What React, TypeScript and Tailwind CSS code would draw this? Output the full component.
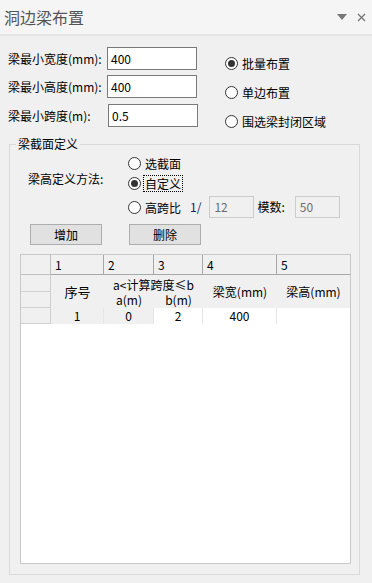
import React from "react";

const ui = { fontFamily: '"Noto Sans CJK SC", "Microsoft YaHei", sans-serif' };

function Radio({ label, checked, focus }: { label: string; checked?: boolean; focus?: boolean }) {
  return (
    <div className="flex items-center">
      <span className="flex h-[13px] w-[13px] items-center justify-center rounded-full border border-[#333] bg-white">
        {checked && <span className="h-[7px] w-[7px] rounded-full bg-[#333]" />}
      </span>
      <span
        className={
          "ml-[2px] text-[12px] leading-[15px] text-black " +
          (focus ? "border border-dotted border-black px-[1px]" : "border border-transparent px-[1px]")
        }
      >
        {label}
      </span>
    </div>
  );
}

function Field({ label, value, offset }: { label: string; value: string; offset?: boolean }) {
  return (
    <div className="flex h-[23px] items-center">
      <span className={(offset ? "w-[100px]" : "w-[99px]") + " text-[12px] text-black"}>{label}</span>
      <div className="flex h-[23px] w-[90px] items-center border border-[#7a7a7a] bg-white px-[3px] text-[12px] text-black">
        {value}
      </div>
    </div>
  );
}

export default function App() {
  const head = "flex items-center bg-[#f0f0f0] pl-[4px] text-[12px] leading-none text-black border-r border-b border-[#a8a8a8]";
  const rowHead = "bg-[#f0f0f0] border-r border-b border-[#d0d0d0]";
  const cell = "flex items-center justify-center overflow-hidden whitespace-nowrap text-[12px] leading-none text-black";

  return (
    <div className="h-[583px] w-[372px] overflow-hidden bg-[#f0f0f0]" style={ui}>
      {/* title bar */}
      <div className="flex h-[36px] items-center justify-between border-b-2 border-[#e6e6e6] bg-[#f5f5f5] pl-[4px] pr-[6px]">
        <span className="text-[16px] leading-none text-[#555]">洞边梁布置</span>
        <div className="flex items-center gap-[10px]">
          <svg width="10" height="6" viewBox="0 0 10 6">
            <path d="M0 0 L10 0 L5 6 Z" fill="#777" />
          </svg>
          <svg width="9" height="9" viewBox="0 0 9 9">
            <path d="M1 1 L8 8 M8 1 L1 8" stroke="#777" strokeWidth="1.4" />
          </svg>
        </div>
      </div>

      {/* top fields */}
      <div className="mt-[11px] flex">
        <div className="flex w-[225px] flex-col pl-[8px]">
          <Field label="梁最小宽度(mm):" value="400" />
          <div className="h-[5px]" />
          <Field label="梁最小高度(mm):" value="400" />
          <div className="h-[6px]" />
          <Field label="梁最小跨度(m):" value="0.5" offset />
        </div>
        <div className="flex flex-col gap-[12px] pt-[8px]">
          <Radio label="批量布置" checked />
          <Radio label="单边布置" />
          <Radio label="围选梁封闭区域" />
        </div>
      </div>

      {/* group box */}
      <fieldset className="ml-[9px] mt-[6px] h-[439px] w-[351px] border border-[#d9d9d9] pl-[1px]">
        <legend className="ml-[5px] px-[2px] text-[12px] leading-[16px] text-black">梁截面定义</legend>

        <div className="flex pt-[2px]">
          <div className="w-[117px] pl-[17px] pt-[16px] text-[12px] text-black">梁高定义方法:</div>
          <div className="flex flex-col">
            <div className="flex h-[18px] items-center">
              <Radio label="选截面" />
            </div>
            <div className="mt-[2px] flex h-[18px] items-center">
              <Radio label="自定义" checked focus />
            </div>
            <div className="mt-[4px] flex h-[22px] items-center">
              <Radio label="高跨比" />
              <span className="ml-[7px] text-[12px] text-[#1a1a6a]">1/</span>
              <div className="ml-[8px] flex h-[22px] w-[45px] items-center border border-[#cccccc] bg-[#f0f0f0] px-[4px] text-[12px] text-[#6d6d6d]">
                12
              </div>
              <span className="ml-[3px] text-[12px] text-black">模数:</span>
              <div className="ml-[10px] flex h-[22px] w-[45px] items-center border border-[#cccccc] bg-[#f0f0f0] px-[4px] text-[12px] text-[#6d6d6d]">
                50
              </div>
            </div>
          </div>
        </div>

        <div className="mt-[6px] flex pl-[19px]">
          <div className="flex h-[21px] w-[72px] items-center justify-center border border-[#adadad] bg-[#e1e1e1] text-[12px] text-black">
            增加
          </div>
          <div className="ml-[27px] flex h-[21px] w-[72px] items-center justify-center border border-[#adadad] bg-[#e1e1e1] text-[12px] text-black">
            删除
          </div>
        </div>

        {/* grid */}
        <div className="ml-[9px] mt-[9px] h-[310px] w-[331px] border border-[#c8c8c8] bg-white">
          <div className="grid grid-cols-[30px_53px_50px_49px_74px_73px] grid-rows-[20px_17px_16px_16px]">
            <div className="border-r border-b border-[#c0c0c0] bg-[#f0f0f0]" />
            <div className={head}>1</div>
            <div className={head}>2</div>
            <div className={head}>3</div>
            <div className={head}>4</div>
            <div className={head + " border-r-0"}>5</div>

            <div className={rowHead + " col-start-1 row-start-2"} />
            <div className={rowHead + " col-start-1 row-start-3"} />
            <div className={rowHead + " col-start-1 row-start-4"} />

            <div className={cell + " col-start-2 row-span-2 row-start-2 bg-[#f0f0f0] text-[13px]"}>序号</div>
            <div className={cell + " col-span-2 col-start-3 row-start-2 bg-[#f0f0f0] pt-[2px] text-[11px]"}>a&lt;计算跨度≤b</div>
            <div className={cell + " col-start-3 row-start-3 bg-[#f0f0f0] text-[11px]"}>a(m)</div>
            <div className={cell + " col-start-4 row-start-3 bg-[#f0f0f0] text-[11px]"}>b(m)</div>
            <div className={cell + " col-start-5 row-span-2 row-start-2 bg-[#f0f0f0]"}>梁宽(mm)</div>
            <div className={cell + " col-start-6 row-span-2 row-start-2 bg-[#f0f0f0]"}>梁高(mm)</div>

            <div className={cell + " col-start-2 row-start-4 bg-[#f0f0f0] border-r border-[#e6e6e6]"}>1</div>
            <div className={cell + " col-start-3 row-start-4 bg-[#f0f0f0] border-r border-[#e6e6e6]"}>0</div>
            <div className={cell + " col-start-4 row-start-4 bg-white border-r border-[#e6e6e6]"}>2</div>
            <div className={cell + " col-start-5 row-start-4 bg-white border-r border-[#e6e6e6]"}>400</div>
            <div className={cell + " col-start-6 row-start-4 bg-white"} />
          </div>
        </div>
      </fieldset>
    </div>
  );
}
